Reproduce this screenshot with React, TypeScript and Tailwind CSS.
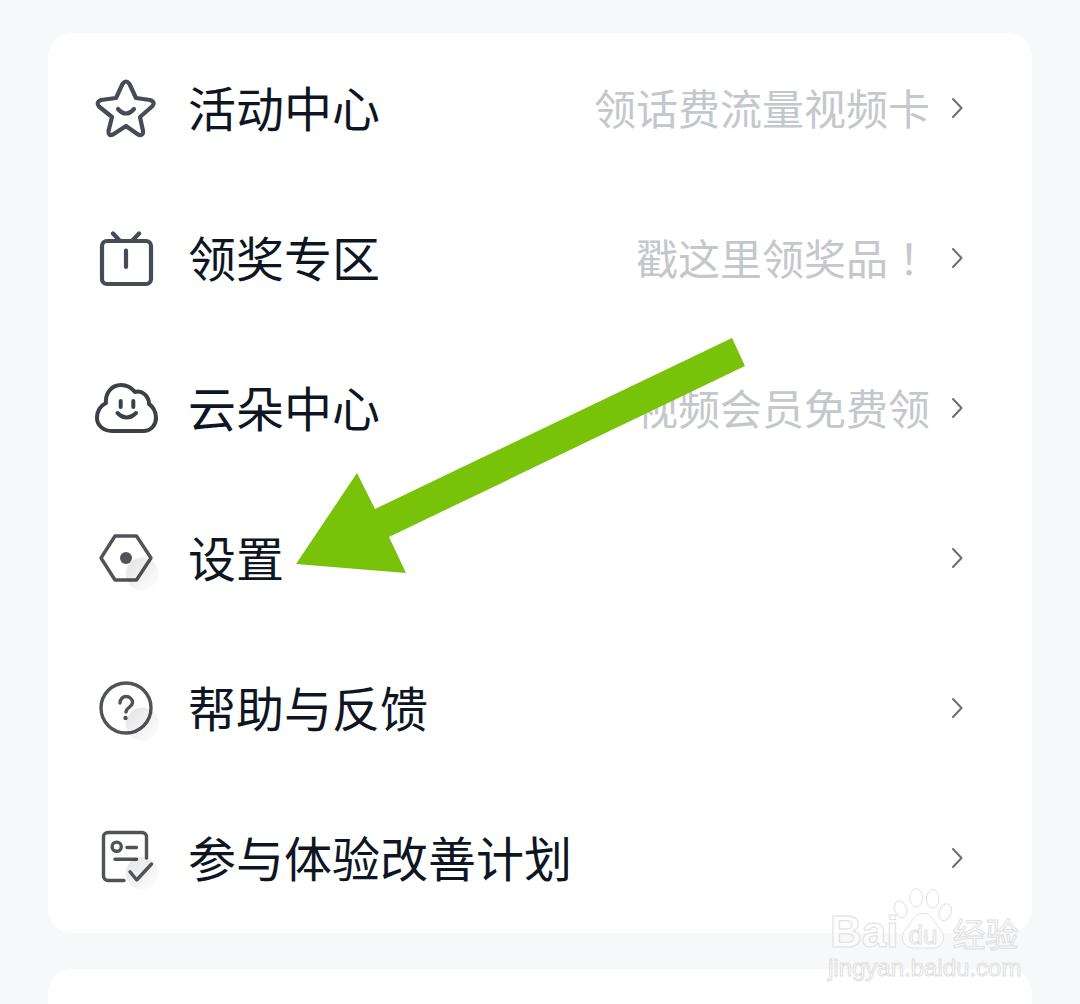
import { useId } from "react";

const stroke = "#505357";

const Shade = ({ cx, cy }: { cx: number; cy: number }) => {
  const id = useId();
  return (
    <>
      <defs>
        <linearGradient id={id} x1="0" y1="0" x2="1" y2="1">
          <stop offset="0.1" stopColor="#000" stopOpacity="0.1" />
          <stop offset="0.9" stopColor="#000" stopOpacity="0.01" />
        </linearGradient>
      </defs>
      <circle cx={cx} cy={cy} r="16.5" fill={`url(#${id})`} stroke="none" />
    </>
  );
};

const StarIcon = () => (
  <svg viewBox="0 0 64 64" className="w-[64px] h-[64px] overflow-visible" fill="none" stroke="#454c55" strokeWidth="4.2" strokeLinecap="round" strokeLinejoin="round">
    <path d="M28.5 8 Q32 3 35.5 8 L42 22 L56 24 Q62 26 58 30.5 L46 41 L49 55 Q49.5 60.5 44 58.5 L32 50 L19 58.5 Q14 60.5 14.5 55 L18 41 L5 30.5 Q1.5 26 7 24 L22 22 Z" />
    <path d="M24 33 Q32 42 40 33" />
  </svg>
);

const TvIcon = () => (
  <svg viewBox="0 0 64 64" className="w-[64px] h-[64px] overflow-visible" fill="none" stroke="#454c55" strokeWidth="4.2" strokeLinecap="round" strokeLinejoin="round">
    <rect x="8" y="15" width="49" height="43" rx="5" />
    <path d="M19 7.5 L26 15 M45 7.5 L38 15 M32 24.5 V41" />
  </svg>
);

const CloudIcon = () => (
  <svg viewBox="0 0 64 64" className="w-[64px] h-[64px] overflow-visible" fill="none" stroke="#3c4047" strokeWidth="4" strokeLinecap="round" strokeLinejoin="round">
    <path d="M18 55 H49 C58 55 62 48 62 42 C62 35 58 30 55 28 C55 20 48 14 41 16 C37 11 32 9 27 9 C17 9 11 18 12 27 C6 30 3 36 3 42 C3 49 9 55 18 55 Z" />
    <path d="M26.7 25 V31 M39.3 25 V31 M23.5 37 Q32.7 46 42 37" />
  </svg>
);

const GearIcon = () => (
  <svg viewBox="0 0 64 64" className="w-[64px] h-[64px] overflow-visible" fill="none" stroke={stroke} strokeWidth="3.4" strokeLinejoin="round">
    <path d="M21 10 H42.5 L57 32 L42.5 54 H21 L7 32 Z" />
    <circle cx="32" cy="32" r="6" fill={stroke} stroke="none" />
    <Shade cx={48.3} cy={48} />
  </svg>
);

const HelpIcon = () => (
  <svg viewBox="0 0 64 64" className="w-[64px] h-[64px] overflow-visible" fill="none" stroke={stroke} strokeWidth="3.4" strokeLinecap="round" strokeLinejoin="round">
    <circle cx="32" cy="32" r="25" />
    <path d="M26 27 C26 23 29 20.5 32 20.5 C36 20.5 38.5 23.5 38.5 26.5 C38.5 31 32 31.5 32 36" />
    <circle cx="31.5" cy="42" r="2.2" fill={stroke} stroke="none" />
    <Shade cx={48.3} cy={48.3} />
  </svg>
);

const FormIcon = () => (
  <svg viewBox="0 0 64 64" className="w-[64px] h-[64px] overflow-visible" fill="none" stroke={stroke} strokeWidth="3.4" strokeLinecap="round" strokeLinejoin="round">
    <path d="M30 54.5 H14 A4.5 4.5 0 0 1 9.5 50 V11 A4.5 4.5 0 0 1 14 6.5 H48 A4.5 4.5 0 0 1 52.5 11 V32" />
    <circle cx="22.7" cy="20.7" r="4.6" />
    <path d="M33 21.5 H42.5 M21 33.3 H42.5" />
    <Shade cx={48.3} cy={47.3} />
    <path d="M36 45.7 L42.7 54 L57.5 38" />
  </svg>
);

const Chevron = () => (
  <svg viewBox="0 0 12 22" className="w-[12px] h-[22px]" fill="none" stroke="#6b6e73" strokeWidth="2" strokeLinecap="round" strokeLinejoin="round">
    <path d="M2 2 L10.5 11 L2 20" />
  </svg>
);

const rows = [
  { icon: <StarIcon />, title: "活动中心", hint: "领话费流量视频卡" },
  { icon: <TvIcon />, title: "领奖专区", hint: <>戳这里领奖品<span className="font-['Noto_Sans_CJK_TC',sans-serif]">！</span></> },
  { icon: <CloudIcon />, title: "云朵中心", hint: "视频会员免费领" },
  { icon: <GearIcon />, title: "设置", hint: "" },
  { icon: <HelpIcon />, title: "帮助与反馈", hint: "" },
  { icon: <FormIcon />, title: "参与体验改善计划", hint: "" },
];

const Watermark = () => (
  <div className="absolute left-[828px] top-[886px] w-[196px] pt-[24px] flex flex-col font-['Liberation_Sans',sans-serif] text-white/50 [-webkit-text-stroke:1px_#e0e0e0]">
    <svg viewBox="0 0 60 66" className="absolute left-[66px] top-[2px] w-[58px] h-[64px]" fill="#ffffff" fillOpacity="0.6" stroke="#e0e0e0" strokeWidth="1">
      <ellipse cx="7" cy="22" rx="6" ry="9" transform="rotate(-20 7 22)" />
      <ellipse cx="23" cy="10" rx="6.5" ry="9.5" />
      <ellipse cx="40" cy="11" rx="6.5" ry="9.5" />
      <ellipse cx="53" cy="25" rx="6" ry="9" transform="rotate(20 53 25)" />
      <path d="M30 26 C39 26 42 36 48 43 C55 51 50 62 40 62 H20 C10 62 5 51 12 43 C18 36 21 26 30 26 Z" />
    </svg>
    <div className="relative flex items-baseline pl-[2px] h-[44px]">
      <span className="text-[44px] leading-[44px] font-bold">Bai</span>
      <span className="ml-[10px] text-[26px] leading-[26px] -translate-y-[3px]">du</span>
      <span className="ml-[15px] text-[33px] leading-[36px] font-['Noto_Sans_CJK_SC',sans-serif]">经验</span>
    </div>
    <div className="text-[24px] leading-[28px] whitespace-nowrap">jingyan.baidu.com</div>
  </div>
);

export default function App() {
  return (
    <div className="relative w-[1080px] h-[1004px] overflow-hidden bg-[#f7f8fa] pt-[33px] px-[48px] font-['Noto_Sans_CJK_SC',sans-serif]">
      <div className="bg-white rounded-[24px] flex flex-col">
        {rows.map((row) => (
          <div key={row.title} className="h-[150px] flex items-center pl-[46px] pr-[69px]">
            <div className="mr-[30px]">{row.icon}</div>
            <span className="text-[48px] leading-[66px] pb-[4px] text-[#0e1624] whitespace-nowrap">{row.title}</span>
            <span className="ml-auto mr-[21px] text-[42px] leading-[58px] pb-[3px] text-[#c4c7cc] whitespace-nowrap">{row.hint}</span>
            <Chevron />
          </div>
        ))}
      </div>
      <div className="bg-white rounded-[24px] mt-[36px] h-[200px]" />

      <svg viewBox="0 0 1080 1004" className="absolute left-0 top-0 w-[1080px] h-[1004px] pointer-events-none">
        <polygon points="732,338 745,366 389,537 406,573 296,564 357,473 375,509" fill="#79c20a" />
      </svg>
      <Watermark />
    </div>
  );
}
